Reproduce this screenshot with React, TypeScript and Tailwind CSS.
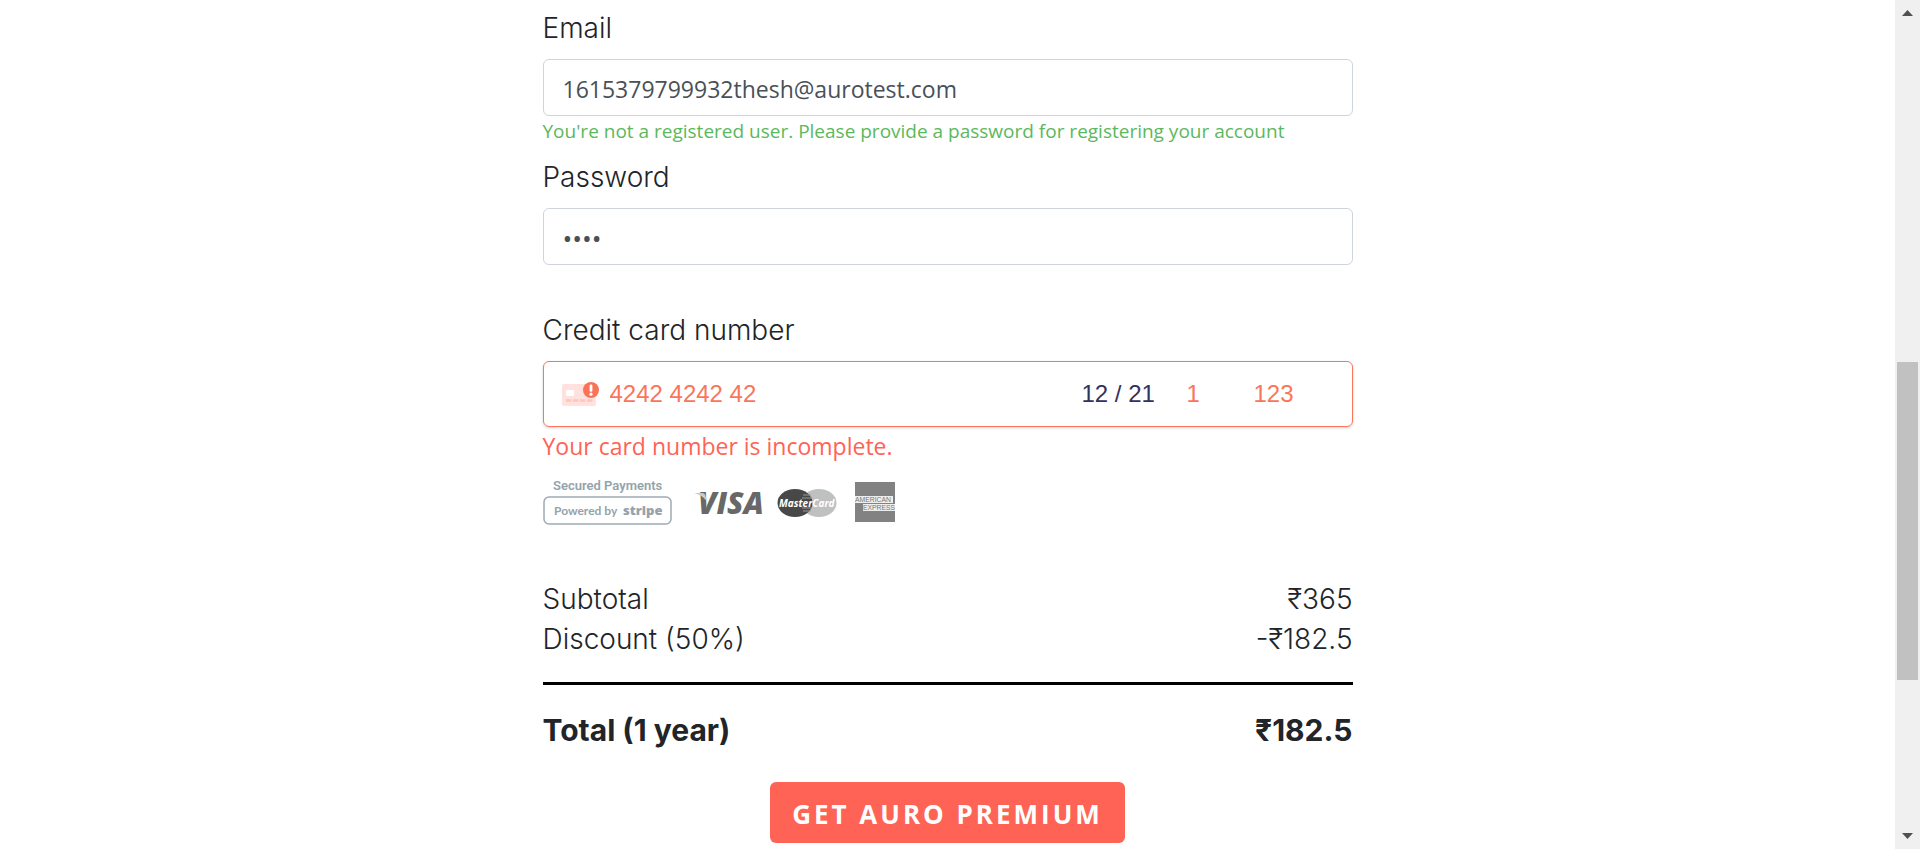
import { useState } from "react";
import type { ReactNode } from "react";

const labelClass = "mb-[11px] block font-[Inter,sans-serif] text-[28px] font-light leading-10";
const fieldClass =
  "block h-[57px] w-full rounded-md border border-[#ced4da] bg-white px-[19px] pt-[2px] text-[#495057] outline-none";
const cardInputClass =
  "min-w-0 bg-transparent font-['Liberation_Sans',Arial,sans-serif] text-2xl outline-none";

function CardErrorIcon() {
  return (
    <svg className="h-[25px] w-[38px] shrink-0" viewBox="0 0 38 25" aria-hidden="true">
      <rect x="0" y="2" width="34" height="22" rx="2" fill="#ffe1dd" />
      <rect x="4" y="8" width="8" height="6" rx="1" fill="#fff" />
      <path d="M4 18.5h27" stroke="#ffc4bb" strokeWidth="2.4" strokeDasharray="5.500 1.500" />
      <circle cx="29" cy="8" r="8" fill="#fa7258" />
      <path d="M29 3.800v4.600" stroke="#fff" strokeWidth="2.8" strokeLinecap="round" />
      <circle cx="29" cy="12.2" r="1.6" fill="#fff" />
    </svg>
  );
}

function PaymentLogos() {
  return (
    <svg
      className="h-[50px] w-[354px]"
      viewBox="0 0 354 50"
      role="img"
      aria-label="Secured payments powered by Stripe. Visa, MasterCard, American Express"
    >
      <g fill="#94a3ab" fontFamily="Roboto, sans-serif">
        <text x="10" y="13" fontSize="13" fontWeight="600">
          Secured Payments
        </text>
        <rect x="1" y="20" width="127" height="27" rx="5" fill="none" stroke="#9dabb2" strokeWidth="1.5" />
        <text x="11" y="38" fontSize="12" fontWeight="700" fontFamily="Lato, sans-serif">
          Powered by
        </text>
        <text x="80" y="38" fontSize="13" fontWeight="800" fontFamily="'Open Sans', sans-serif">
          stripe
        </text>
      </g>
      <text x="155" y="37" fontSize="30" fontWeight="800" fontStyle="italic" fontFamily="'Open Sans', sans-serif" fill="#686868">
        VISA
      </text>
      <path d="M151 16h8c2 0 3 1 3.500 3l1.500 6c-2-4-6-7-13-9z" fill="#c6cccc" />
      <ellipse cx="276" cy="26" rx="17.500" ry="14" fill="#bfc1c1" />
      <ellipse cx="252" cy="26" rx="17.500" ry="14" fill="#484848" />
      <path d="M260 18h8M259 21h10M259 31h10M260 34h8" stroke="#999" strokeWidth="1.200" />
      <text x="236" y="30" fontSize="10" fontWeight="700" fontStyle="italic" fontFamily="'Open Sans', sans-serif" fill="#fff">
        MasterCard
      </text>
      <rect x="312" y="5" width="40" height="40" fill="#828282" />
      <path d="M312 19h38v7h-38zM320 27h32v7h-32z" fill="#eee" />
      <g fontSize="6.800" fontFamily="'Liberation Sans', sans-serif" fill="#777">
        <text x="312" y="25">AMERICAN</text>
        <text x="320" y="33">EXPRESS</text>
      </g>
    </svg>
  );
}

function SummaryRow({ label, children }: { label: string; children: ReactNode }) {
  return (
    <div className="flex justify-between">
      <dt>{label}</dt>
      <dd>{children}</dd>
    </div>
  );
}

function ScrollRail() {
  return (
    <div className="sticky top-0 flex h-screen w-[25px] shrink-0 flex-col items-center bg-[#f0f0f0] py-[10px]" aria-hidden="true">
      <svg className="h-[6px] w-[11px]" viewBox="0 0 11 6">
        <path d="M5.500 0 11 6H0z" fill="#505050" />
      </svg>
      <div className="grow-[346]" />
      <div className="w-[21px] grow-[318] bg-[#c1c1c1]" />
      <div className="grow-[153]" />
      <svg className="h-[6px] w-[11px]" viewBox="0 0 11 6">
        <path d="M0 0h11L5.500 6z" fill="#505050" />
      </svg>
    </div>
  );
}

export default function App() {
  const [email, setEmail] = useState("1615379799932thesh@aurotest.com");
  const [password, setPassword] = useState("abcd");
  const [card, setCard] = useState({ number: "4242 4242 42", expiry: "12 / 21", cvc: "1", zip: "123" });

  return (
    <div className="flex min-h-screen bg-white font-['Open_Sans',sans-serif] text-[#212529]">
      <main className="min-w-0 flex-1 px-4">
        <form className="mx-auto max-w-[810px] pt-2 pb-[5px]" onSubmit={(e) => e.preventDefault()}>
          <label htmlFor="email" className={labelClass}>Email</label>
          <input id="email" type="email" className={`${fieldClass} text-[23px]`} value={email} onChange={(e) => setEmail(e.target.value)} />
          <p className="mb-[11px] text-[19px] leading-[30px] text-[#5cb85c]">
            You're not a registered user. Please provide a password for registering your account
          </p>

          <label htmlFor="password" className={labelClass}>Password</label>
          <input id="password" type="password" className={`${fieldClass} text-[26px]`} value={password} onChange={(e) => setPassword(e.target.value)} />

          <label htmlFor="card" className={`${labelClass} mt-[45px]`}>Credit card number</label>
          <div className="flex h-[66px] items-center rounded-md border border-[#fa755a] px-[18px] shadow-[0_1px_3px_0_#cfd7df]">
            <CardErrorIcon />
            <input id="card" className={`${cardInputClass} ml-[10px] flex-1 text-[#fa755a]`} value={card.number} onChange={(e) => setCard({ ...card, number: e.target.value })} />
            <input aria-label="Expiry date" className={`${cardInputClass} w-[105px] text-[#32325d]`} value={card.expiry} onChange={(e) => setCard({ ...card, expiry: e.target.value })} />
            <input aria-label="CVC" className={`${cardInputClass} w-[67px] text-[#fa755a]`} value={card.cvc} onChange={(e) => setCard({ ...card, cvc: e.target.value })} />
            <input aria-label="ZIP" className={`${cardInputClass} w-20 text-[#fa755a]`} value={card.zip} onChange={(e) => setCard({ ...card, zip: e.target.value })} />
          </div>
          <p role="alert" className="mb-3 text-[23px] leading-[38px] text-[#ff6355]">Your card number is incomplete.</p>
          <PaymentLogos />

          <dl className="mt-[52px] font-[Inter,sans-serif] text-[28px] font-light leading-10">
            <SummaryRow label="Subtotal">₹365</SummaryRow>
            <SummaryRow label="Discount (50%)">-₹182.5</SummaryRow>
            <div className="mt-[23px] border-t-[3px] border-black pt-[25px] text-[30px] font-bold">
              <SummaryRow label="Total (1 year)">₹182.5</SummaryRow>
            </div>
          </dl>

          <div className="mt-8 flex justify-center">
            <button type="submit" className="h-[61px] rounded-md bg-[#ff6355] px-[22px] pt-1 text-[26px] font-bold tracking-[3px] text-white">
              GET AURO PREMIUM
            </button>
          </div>
        </form>
      </main>
      <ScrollRail />
    </div>
  );
}
